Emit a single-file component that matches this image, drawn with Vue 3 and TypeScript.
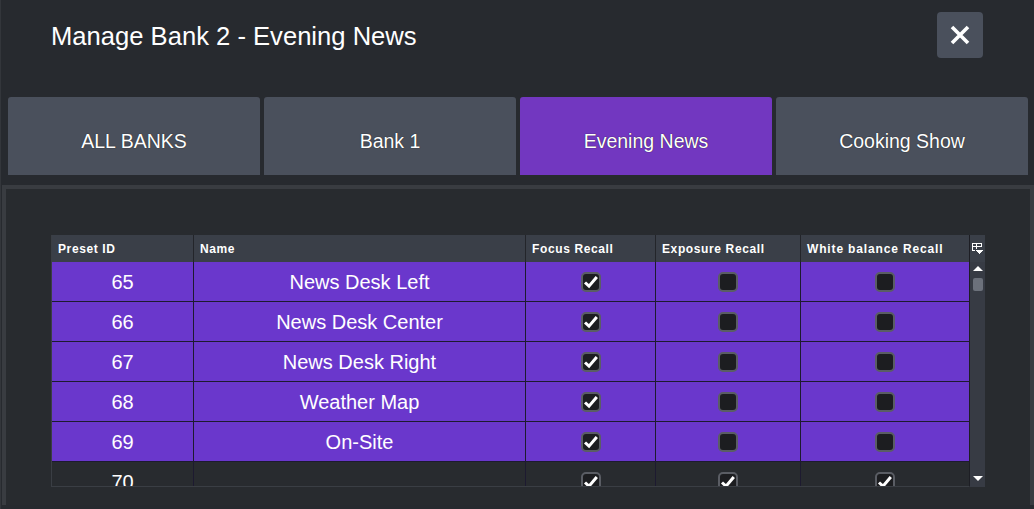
<template>
  <div class="page">
    <header class="top-bar">
      <h1 class="title">Manage Bank 2 - Evening News</h1>
      <button class="close-btn" aria-label="Close">
        <svg width="20" height="20" viewBox="0 0 20 20">
          <path d="M2 2 L18 18 M18 2 L2 18" stroke="#fff" stroke-width="3.6" fill="none" />
        </svg>
      </button>
    </header>

    <nav class="tabs">
      <button v-for="tab in tabs" :key="tab" class="tab" :class="{ active: tab === activeTab }">
        {{ tab }}
      </button>
    </nav>

    <section class="panel">
      <div class="table-wrap">
        <div class="table">
          <div class="row head">
            <div class="cell">Preset ID</div>
            <div class="cell">Name</div>
            <div class="cell">Focus Recall</div>
            <div class="cell">Exposure Recall</div>
            <div class="cell">White balance Recall</div>
          </div>
          <div v-for="p in presets" :key="p.id" class="row body" :class="{ selected: p.selected }">
            <div class="cell center text">{{ p.id }}</div>
            <div class="cell center text">{{ p.name }}</div>
            <div v-for="(on, i) in p.recall" :key="i" class="cell center">
              <span class="check">
                <svg v-if="on" width="16" height="16" viewBox="0 0 16 16">
                  <path d="M2 8.5 L6 12.2 L13.8 3" stroke="#fff" stroke-width="3" fill="none" />
                </svg>
              </span>
            </div>
          </div>
        </div>
        <aside class="scroll">
          <div class="scroll-corner">
            <svg width="11" height="11" viewBox="0 0 11 11" shape-rendering="crispEdges">
              <path d="M0.5 0.5 H9.5 V3.5 H0.5 Z M0.5 3.5 V7.5 H3 M4.5 0.5 V6" stroke="#fff" stroke-width="1" fill="none" />
              <path d="M3.5 7 H11 L7.2 11 Z" fill="#fff" />
            </svg>
          </div>
          <div class="scroll-track">
            <span class="arrow up"></span>
            <span class="thumb"></span>
            <span class="spacer"></span>
            <span class="arrow down"></span>
          </div>
        </aside>
      </div>
    </section>
  </div>
</template>

<script setup lang="ts">
interface Preset {
  id: number
  name: string
  recall: boolean[]
  selected: boolean
}

const tabs = ['ALL BANKS', 'Bank 1', 'Evening News', 'Cooking Show']
const activeTab = 'Evening News'

const presets: Preset[] = [
  { id: 65, name: 'News Desk Left', recall: [true, false, false], selected: true },
  { id: 66, name: 'News Desk Center', recall: [true, false, false], selected: true },
  { id: 67, name: 'News Desk Right', recall: [true, false, false], selected: true },
  { id: 68, name: 'Weather Map', recall: [true, false, false], selected: true },
  { id: 69, name: 'On-Site', recall: [true, false, false], selected: true },
  { id: 70, name: '', recall: [true, true, true], selected: false }
]
</script>

<style>
html,
body {
  margin: 0;
  background: #272a2f;
}
</style>

<style scoped>
.page {
  width: 1034px;
  height: 509px;
  overflow: hidden;
  box-sizing: border-box;
  border-left: 1px solid #33363b;
  background: #272a2f;
  font-family: "Liberation Sans", Arial, sans-serif;
  color: #fff;
}

.top-bar {
  height: 97px;
  box-sizing: border-box;
  display: flex;
  align-items: flex-start;
  justify-content: space-between;
  padding: 12px 50px 0 50px;
}

.title {
  margin: 8px 0 0;
  font-size: 25.6px;
  line-height: 32px;
  font-weight: 400;
}

.close-btn {
  width: 46px;
  height: 46px;
  margin-right: 1px;
  padding: 0;
  border: none;
  border-radius: 4px;
  background: #4a505c;
  display: flex;
  align-items: center;
  justify-content: center;
}

.tabs {
  display: grid;
  grid-template-columns: repeat(4, 252px);
  gap: 4px;
  padding-left: 7px;
}

.tab {
  height: 78px;
  padding: 10px 0 0;
  border: none;
  border-radius: 3px 3px 0 0;
  background: #4a505c;
  color: #fff;
  font-family: inherit;
  font-size: 19.5px;
  text-shadow: 0 0 1px #111;
}

.tab.active {
  background: #7237c0;
}

.panel {
  margin: 10px 0 0 1px;
  height: 320px;
  box-sizing: border-box;
  border-top: 4px solid #393c41;
  border-left: 4px solid #393c41;
  border-right: 4px solid #393c41;
  background: #282b2f;
  padding: 46px 45px 0 45px;
}

.table-wrap {
  width: 934px;
  height: 252px;
  display: flex;
}

.table {
  width: 919px;
  height: 252px;
  box-sizing: border-box;
  overflow: hidden;
  border-left: 1px solid #3a3e44;
  border-right: 1px solid #1d1e24;
  border-bottom: 1px solid #3a3e44;
}

.row {
  display: grid;
  grid-template-columns: 142px 332px 130px 145px 168px;
}

.head {
  height: 27px;
  background: #3a3f48;
  font-size: 12px;
  font-weight: 700;
  letter-spacing: 0.62px;
}

.head .cell {
  display: flex;
  align-items: center;
  padding-left: 6px;
  border-right: 1px solid #23252a;
}

.head .cell:last-child {
  letter-spacing: 0.85px;
}

.body {
  height: 40px;
  box-sizing: border-box;
  border-bottom: 1px solid #1d1a30;
  font-size: 20px;
  background: #282b2f;
}

.body.selected {
  background: #6a37cc;
}

.body .cell {
  border-right: 1px solid #1d1a30;
}

.row .cell:last-child {
  border-right: none;
}

.center {
  display: flex;
  align-items: center;
  justify-content: center;
}

.text {
  padding-top: 2px;
}

.check {
  width: 16px;
  height: 16px;
  border: 2px solid #5a5d64;
  border-radius: 5px;
  background: #1c1d20;
  display: block;
}

.check svg {
  display: block;
}

.scroll {
  width: 15px;
  display: flex;
  flex-direction: column;
  background: #373b44;
}

.scroll-corner {
  height: 27px;
  display: flex;
  align-items: center;
  justify-content: center;
  background: #3a3f48;
}

.scroll-track {
  flex: 1;
  display: flex;
  flex-direction: column;
  align-items: center;
  padding: 4px 0 6px;
}

.arrow {
  width: 0;
  height: 0;
  border-left: 5px solid transparent;
  border-right: 5px solid transparent;
}

.arrow.up {
  border-bottom: 5px solid #fff;
}

.arrow.down {
  border-top: 5px solid #fff;
}

.thumb {
  width: 10px;
  height: 13px;
  margin-top: 7px;
  border-radius: 2px;
  background: #6c717b;
}

.spacer {
  flex: 1;
}
</style>
